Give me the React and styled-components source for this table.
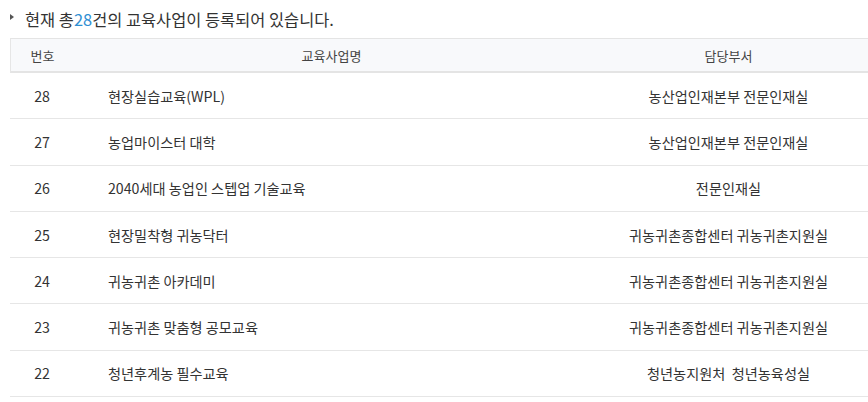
import React from "react";
import styled, { createGlobalStyle } from "styled-components";

const Global = createGlobalStyle`
  html, body { margin: 0; padding: 0; background: #fff; overflow: hidden; }
  body { font-family: "Noto Sans CJK KR", "Noto Sans", sans-serif; color: #333; }
`;

const Page = styled.div`
  width: 868px;
  padding: 0 0 0 10px;
  box-sizing: border-box;
`;

const Title = styled.h2`
  margin: 0;
  height: 38px;
  display: flex;
  align-items: center;
  gap: 11px;
  font-size: 16.4px;
  font-weight: 400;
  color: #333;
  &::before {
    content: "";
    width: 0;
    height: 0;
    border-left: 4px solid #555;
    border-top: 3.5px solid transparent;
    border-bottom: 3.5px solid transparent;
    margin-top: -4px;
  }
`;

const Count = styled.em`
  font-style: normal;
  color: #2f8fd3;
`;

const Table = styled.div`
  width: 858px;
  display: grid;
  grid-template-columns: 64px 515px 1fr;
`;

const HeadCell = styled.div`
  height: 32px;
  display: flex;
  align-items: center;
  justify-content: center;
  background: #f8f9fb;
  border-top: 1px solid #e4e4e4;
  border-bottom: 2px solid #e4e4e4;
  border-left: ${(p) => (p.$first ? "1px solid #e6e6e6" : "0")};
  font-size: 13px;
  color: #444;
`;

const Cell = styled.div`
  height: 45.3px;
  display: flex;
  align-items: center;
  justify-content: ${(p) => (p.$align === "left" ? "flex-start" : "center")};
  padding-left: ${(p) => (p.$align === "left" ? "34px" : "0")};
  border-bottom: 1px solid #e6e6e6;
  font-size: 14.2px;
  color: #333;
`;

const rows = [
  [28, "현장실습교육(WPL)", "농산업인재본부 전문인재실"],
  [27, "농업마이스터 대학", "농산업인재본부 전문인재실"],
  [26, "2040세대 농업인 스텝업 기술교육", "전문인재실"],
  [25, "현장밀착형 귀농닥터", "귀농귀촌종합센터 귀농귀촌지원실"],
  [24, "귀농귀촌 아카데미", "귀농귀촌종합센터 귀농귀촌지원실"],
  [23, "귀농귀촌 맞춤형 공모교육", "귀농귀촌종합센터 귀농귀촌지원실"],
  [22, "청년후계농 필수교육", "청년농지원처\u00a0\u00a0청년농육성실"],
];

export default function App() {
  return (
    <Page>
      <Global />
      <Title>
        <span>
          현재 총<Count>28</Count>건의 교육사업이 등록되어 있습니다.
        </span>
      </Title>
      <Table>
        <HeadCell $first>번호</HeadCell>
        <HeadCell>교육사업명</HeadCell>
        <HeadCell>담당부서</HeadCell>
        {rows.map(([n, name, dept]) => (
          <React.Fragment key={n}>
            <Cell>{n}</Cell>
            <Cell $align="left">{name}</Cell>
            <Cell>{dept}</Cell>
          </React.Fragment>
        ))}
      </Table>
    </Page>
  );
}
